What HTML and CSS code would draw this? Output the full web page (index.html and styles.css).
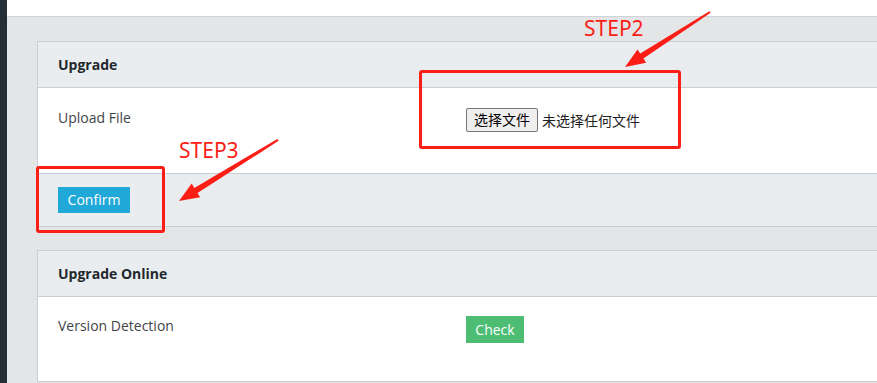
FILE: index.html
```html
<!DOCTYPE html>
<html lang="en">
<head>
    <meta charset="UTF-8">
    <title>Upgrade</title>
    <link rel="stylesheet" href="styles.css">
</head>
<body>

<div class="app">
    <div class="sidebar"></div>
    <div class="main">
        <div class="topbar"></div>
        <div class="content">
            <div class="card">
                <div class="card-header">Upgrade</div>
                <div class="card-body">
                    <div class="form-row">
                        <label class="form-label">Upload File</label>
                        <div class="file-input">
                            <span class="file-btn">选择文件</span>
                            <span class="file-name">未选择任何文件</span>
                        </div>
                    </div>
                </div>
                <div class="card-footer">
                    <button class="btn btn-info">Confirm</button>
                </div>
            </div>

            <div class="card">
                <div class="card-header">Upgrade Online</div>
                <div class="card-body card-body-online">
                    <div class="form-row">
                        <label class="form-label">Version Detection</label>
                        <button class="btn btn-success">Check</button>
                    </div>
                </div>
            </div>
        </div>
    </div>
</div>

<!-- annotations drawn over the screenshot -->
<div class="mark mark-step2"></div>
<div class="mark mark-step3"></div>
<div class="step step2">STEP2</div>
<div class="step step3">STEP3</div>
<svg class="arrows" width="877" height="383" viewBox="0 0 877 383">
    <polygon fill="#fa1e16" points="709.4,11.2 640.2,53.6 637.5,49.4 625,67 646.2,62.8 643.4,58.6 710.6,12.8"/>
    <polygon fill="#fa1e16" points="277.4,138.9 194.3,187.9 191.7,183.6 179,201 200.1,197.2 197.5,193 278.6,140.8"/>
</svg>

</body>
</html>
```

FILE: styles.css
```css
body {
    margin: 0;
    font-family: "Open Sans", "Noto Sans CJK SC", sans-serif;
    font-size: 14px;
    color: #23282c;
    background: #e4e5e6;
    overflow: hidden;
}
.app {
    display: flex;
    height: 383px;
}
.sidebar {
    width: 7px;
    flex-shrink: 0;
    background: #252e34;
}
.main {
    flex: 1;
    overflow: hidden;
}
.topbar {
    height: 16px;
    background: #fff;
    border-bottom: 1px solid #cfd4d8;
}
.content {
    padding: 24px 0 0 30px;
}
.card {
    width: 1000px;
    background: #fff;
    border: 1px solid #c8ced3;
    margin-bottom: 23px;
}
.card-header {
    background: #e9edf0;
    border-bottom: 1px solid #c8ced3;
    padding: 12px 20px;
    line-height: 21px;
    font-weight: bold;
}
.card-body {
    padding: 20px 20px 41px;
}
.card-body-online {
    padding: 19px 20px 38px;
}
.form-row {
    display: flex;
    align-items: flex-start;
}
.form-label {
    width: 408px;
    line-height: 20px;
    color: #3f4448;
}
.file-input {
    display: flex;
    align-items: center;
    font-size: 14px;
}
.file-btn {
    display: inline-block;
    box-sizing: border-box;
    width: 72px;
    height: 24px;
    line-height: 22px;
    text-align: center;
    border: 1px solid #767676;
    border-radius: 2px;
    background: #efefef;
    color: #000;
}
.file-name {
    margin-left: 4px;
    color: #222;
}
.card-footer {
    background: #e9edf0;
    border-top: 1px solid #c8ced3;
    padding: 13px 20px;
}
.btn {
    border: none;
    font-family: inherit;
    font-size: 14px;
    color: #fff;
    padding: 0 9px;
    height: 26px;
    line-height: 26px;
}
.btn-info {
    background: #20a8d8;
    width: 72px;
}
.btn-success {
    background: #4dbd74;
    width: 58px;
    height: 27px;
}
.mark {
    position: absolute;
    border: 3px solid #fa1e16;
    border-radius: 3px;
    box-sizing: border-box;
}
.mark-step2 {
    left: 419px;
    top: 70px;
    width: 262px;
    height: 79px;
}
.mark-step3 {
    left: 36px;
    top: 166px;
    width: 129px;
    height: 67px;
}
.step {
    position: absolute;
    font-family: "Noto Sans", sans-serif;
    font-size: 21px;
    line-height: 24px;
    color: #fa1e16;
}
.step2 {
    left: 584px;
    top: 16px;
}
.step3 {
    left: 179px;
    top: 138px;
}
.arrows {
    position: absolute;
    left: 0;
    top: 0;
}
```
